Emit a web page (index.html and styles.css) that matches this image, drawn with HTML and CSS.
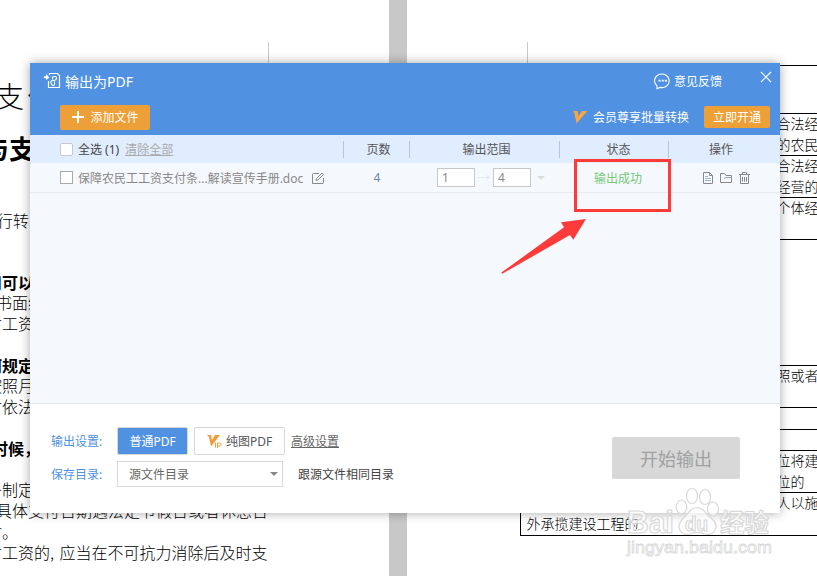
FILE: index.html
```html
<!DOCTYPE html>
<html lang="zh-CN">
<head>
    <meta charset="UTF-8">
    <meta name="viewport" content="width=device-width, initial-scale=1.0">
    <title>输出为PDF</title>
    <link rel="stylesheet" href="styles.css">
</head>
<body>

<div class="document">
    <div class="page page-left">
        <div class="crop-mark"></div>
        <p class="doc-title">支付</p>
        <p class="doc-subtitle">与支</p>
        <p class="first">行转</p>
        <div class="lines">
            <p class="shift bold">司可以</p>
            <p>书面约</p>
            <p class="shift">付工资</p>
            <p></p>
            <p class="shift bold">何规定</p>
            <p class="shift">按照月</p>
            <p class="shift">付依法</p>
            <p></p>
            <p class="half bold">时候，</p>
            <p></p>
            <p class="shift">条制定</p>
            <p>具体支付日期遇法定节假日或者休息日</p>
            <p class="shift">付。</p>
            <p class="shift comma">付工资的, 应当在不可抗力消除后及时支</p>
        </div>
    </div>
    <div class="page page-right">
        <div class="crop-mark"></div>
        <div class="doc-table">
            <div class="cell h48"></div>
            <div class="cell h42"><p>合法经</p><p>的农民</p></div>
            <div class="cell h42"><p>合法经</p><p>经营的</p></div>
            <div class="cell h42"><p>个体经</p></div>
            <div class="cell h126"></div>
            <div class="cell h42"><p>照或者</p></div>
            <div class="cell h22"></div>
            <div class="cell h21"></div>
            <div class="cell h42"><p>位将建</p><p>位的</p></div>
            <div class="cell h43"><p>人以施</p><p class="start">外承揽建设工程的</p></div>
        </div>
    </div>
</div>

<div class="dialog">
    <div class="header">
        <div class="title-bar">
            <svg class="logo" width="18" height="18" viewBox="0 0 18 18" fill="none" stroke="#fff">
                <path d="M5.500 3V1.500H13.500L15.500 3.500V15.500H4.500V9" stroke-width="1.2"/>
                <path d="M0 4.200H2V2L5.500 5.500 2 8V6.300H0z" fill="#fff" stroke="none"/>
                <path d="M8.500 7.500V5Q12.500 3.500 12.500 6T9 8.500 7.500 12 10.500 12V9.500" stroke-width="1.100"/>
            </svg>
            <span class="title">输出为PDF</span>
            <span class="feedback">
                <svg width="17" height="17" viewBox="0 0 17 17" fill="none" stroke="#fff" stroke-width="1.1">
                    <path d="M3 12.900A7.300 6.800 0 1 1 6 14.400L3 15.700z"/>
                    <path d="M4.500 7.700h2M7.700 7.700h2M10.900 7.700h2" stroke-width="1.800"/>
                </svg>
                意见反馈
            </span>
            <svg class="close" width="12" height="12" viewBox="0 0 12 12" stroke="#fff" stroke-width="1.1">
                <path d="M1 1L11 11M11 1L1 11"/>
            </svg>
        </div>
        <div class="toolbar">
            <button class="btn-orange btn-add">
                <svg width="12" height="12" viewBox="0 0 12 12" stroke="#fff" stroke-width="2"><path d="M6 0V12M0 6H12"/></svg>
                添加文件
            </button>
            <span class="vip">
                <svg width="15" height="14" viewBox="0 0 15 14" fill="#f7a640"><path d="M0 1H4.500L5.500 6 9 1H14.500L3.500 13.500 1.500 3.500z"/></svg>
                会员尊享批量转换
            </span>
            <button class="btn-orange btn-open">立即开通</button>
        </div>
    </div>

    <div class="grid table-head">
        <div class="col-name"><span class="checkbox light"></span><span class="dark">全选 (1)</span><a class="clear">清除全部</a></div>
        <div class="col">页数</div>
        <div class="col">输出范围</div>
        <div class="col wide">状态</div>
        <div class="col last">操作</div>
    </div>
    <div class="grid table-row">
        <div class="col-name">
            <span class="checkbox"></span><span class="file">保障农民工工资支付条...解读宣传手册.doc</span>
            <svg class="edit" width="14" height="14" viewBox="0 0 14 14" fill="none" stroke="#888">
                <path d="M8 2.500H2.500Q1.500 2.500 1.500 3.500V12.500H11Q12.500 12.500 12.500 11.500V7"/>
                <path d="M5 9.500L5.500 7.500 11 2 12.500 3.500 7 9z"/>
            </svg>
        </div>
        <div class="pages">4</div>
        <div class="range">
            <span class="num">1</span>
            <svg width="12" height="7" viewBox="0 0 12 7" stroke="#dfe3ea" fill="none"><path d="M0 3.500h2M3 3.500h2M6 3.500h5M9 1.500l2 2-2 2"/></svg>
            <span class="num">4</span>
            <i class="caret pale"></i>
        </div>
        <div class="status">输出成功</div>
        <div class="actions">
            <svg width="12" height="14" viewBox="0 0 12 14" fill="none" stroke="#888">
                <path d="M1.500 1.500H7.500L10.500 4.500V12.500H1.500z"/><path d="M7.500 1.500V4.500H10.500"/><path d="M3 5.500h3M3 7.500h6M3 9.500h6" stroke="#9fb2cf"/>
            </svg>
            <svg width="14" height="14" viewBox="0 0 14 14" fill="none" stroke="#888">
                <path d="M1.500 11.500V2.500H5.500L7 4.500H12.500V11.500z"/><path d="M5 7.500L7 6.500H12.500" stroke="#9aa6b8"/>
            </svg>
            <svg width="13" height="14" viewBox="0 0 13 14" fill="none" stroke="#888">
                <path d="M1 3.500H12M4.500 3V1.500H8.500V3M2.500 4V12.500H10.500V4"/><path d="M4.500 6v4.500M6.500 6v4.500M8.500 6v4.500"/>
            </svg>
        </div>
    </div>

    <div class="empty"></div>

    <div class="footer">
        <div class="settings">
            <div class="line">
                <span class="label">输出设置:</span>
                <button class="mode active">普通PDF</button>
                <button class="mode image-mode">
                    <svg width="15" height="14" viewBox="0 0 15 14"><path d="M0 1H4L5 6 8 1H13L4 12.500 2 3z" fill="#f29a38"/><path d="M8.500 8.500V13.500M10.500 14V9H12.500Q14 9 14 10.500T12.500 12H10.500" fill="none" stroke="#f29a38"/></svg>
                    纯图PDF
                </button>
                <a class="advanced">高级设置</a>
            </div>
            <div class="line">
                <span class="label">保存目录:</span>
                <div class="select">源文件目录<i class="caret"></i></div>
                <span class="same-dir">跟源文件相同目录</span>
            </div>
        </div>
        <button class="start-btn">开始输出</button>
    </div>
</div>

<div class="highlight"></div>
<svg class="arrow" width="90" height="60" viewBox="0 0 90 60">
    <path d="M4.300 57.600L67 12.300 64 7.300 89 4 76.300 24.700 73 20 5.300 58.700z" fill="#fd3b3a"/>
</svg>

<svg class="watermark" width="160" height="80" viewBox="0 0 160 80">
    <g class="mark">
        <text x="7" y="53" font-size="32" textLength="47" lengthAdjust="spacingAndGlyphs">Bai</text>
        <ellipse cx="61.500" cy="27" rx="5.300" ry="7"/>
        <ellipse cx="72" cy="16" rx="5.500" ry="7.500"/>
        <ellipse cx="85" cy="17" rx="5.500" ry="7.500"/>
        <ellipse cx="93" cy="29" rx="5.500" ry="7"/>
        <path d="M69 32Q77 23 85 32C88 37 97 40 96 47 95 54 90 55 85 54 79 52 75 52 70 54 65 55 59 53 59 46 60 39 66 37 69 32z"/>
        <text x="65" y="51" font-size="20" textLength="23" lengthAdjust="spacingAndGlyphs">du</text>
        <text x="100" y="52" font-size="25" textLength="49" lengthAdjust="spacingAndGlyphs">经验</text>
        <text x="7" y="73" font-size="17" textLength="145" lengthAdjust="spacingAndGlyphs" class="url">jingyan.baidu.com</text>
    </g>
</svg>

</body>
</html>
```
FILE: styles.css
```css
* {
    box-sizing: border-box;
}

body {
    position: relative;
    width: 817px;
    height: 576px;
    margin: 0;
    overflow: hidden;
    background: #c8c8c8;
    font-family: "Noto Sans", "Noto Sans CJK SC", sans-serif;
    font-size: 12px;
    color: #666;
}

p {
    margin: 0;
}

button {
    border: none;
    padding: 0;
    font-family: inherit;
    font-size: 12px;
}

/* document behind the dialog */
.document {
    display: flex;
    gap: 18px;
    height: 576px;
    font-family: "Noto Sans CJK SC", sans-serif;
    font-weight: 300;
    color: #000;
    white-space: nowrap;
}

.page {
    background: #fff;
    overflow: hidden;
    padding-top: 42px;
}

.page-left {
    width: 389px;
}

.page-right {
    width: 410px;
}

.crop-mark {
    width: 269px;
    height: 23px;
    border-right: 1px solid #c8c8c8;
}

.page-right .crop-mark {
    width: 121px;
}

.doc-title {
    margin: 10px 0 0 -5px;
    font-size: 29px;
    letter-spacing: 3px;
    line-height: 40px;
}

.doc-subtitle {
    margin: 15px 0 0 -17px;
    font-size: 26px;
    font-weight: bold;
    line-height: 36px;
}

.first {
    margin: 45px 0 0 -3px;
    font-size: 15.9px;
    line-height: 20px;
}

.lines {
    margin-top: 40.5px;
    font-size: 16px;
}

.lines p {
    height: 20.8px;
    margin-left: -4px;
    line-height: 20.8px;
}

.lines .shift {
    margin-left: -14px;
}

.lines .half {
    margin-left: -8px;
}

.lines .comma {
    word-spacing: 2px;
}

.bold {
    font-weight: bold;
}

.doc-table {
    margin-left: 113px;
    border-top: 1px solid #000;
    border-left: 1px solid #000;
    font-size: 14px;
}

.cell {
    display: flex;
    flex-direction: column;
    border-bottom: 1px solid #000;
    padding-left: 255.5px;
}

.cell p {
    line-height: 21px;
}

.cell p:first-child {
    margin-top: -1px;
}

.cell .start {
    margin-left: -250px;
}

.h48 { height: 48px; }
.h42 { height: 42px; }
.h43 { height: 43px; }
.h126 { height: 126px; }
.h22 { height: 22px; }
.h21 { height: 21px; }

/* dialog */
.dialog {
    position: absolute;
    left: 30px;
    top: 63px;
    display: flex;
    flex-direction: column;
    width: 750px;
    height: 450px;
    background: #f5f8fd;
    box-shadow: 0 0 10px rgba(0, 0, 0, 0.35);
    white-space: nowrap;
}

.header {
    height: 72px;
    background: #5092e1;
    color: #fff;
}

.title-bar {
    display: flex;
    align-items: center;
    height: 36px;
    padding: 0 8px 0 14px;
}

.title {
    margin-left: 3px;
    font-size: 14px;
}

.feedback {
    display: flex;
    align-items: center;
    gap: 3px;
    margin-left: auto;
    margin-right: 38px;
}

.close {
    margin-bottom: 8px;
}

.toolbar {
    display: flex;
    align-items: center;
    height: 36px;
    padding: 0 10px 0 30px;
}

.btn-orange {
    display: flex;
    align-items: center;
    justify-content: center;
    background: #eda037;
    border-radius: 2px;
    color: #fff;
}

.btn-add {
    gap: 6px;
    width: 90px;
    height: 25px;
    padding-left: 1px;
}

.btn-open {
    width: 66px;
    height: 22px;
}

.vip {
    display: flex;
    align-items: center;
    gap: 5px;
    margin-left: auto;
    margin-right: 15px;
}

.grid {
    display: grid;
    grid-template-columns: 314px 66px 150px 109px 111px;
    align-items: center;
}

.table-head {
    height: 28px;
    background: #e0edfe;
    color: #555;
}

.table-head > div {
    height: 17px;
    line-height: 17px;
    border-right: 1px solid #b4c6df;
}

.table-head .col {
    padding-left: 4px;
}

.table-head .wide {
    padding-left: 9px;
}

.table-head .last {
    border-right: none;
    padding-right: 11px;
}

.col {
    text-align: center;
}

.col-name {
    display: flex;
    align-items: center;
    padding-left: 30px;
}

.checkbox {
    width: 13px;
    height: 13px;
    margin-right: 5px;
    background: #fff;
    border: 1px solid #aaa;
}

.checkbox.light {
    border-color: #c8c8c8;
    border-radius: 2px;
}

.dark {
    color: #444;
}

.clear {
    margin-left: 6px;
    color: #aaa;
    text-decoration: underline;
}

.table-row {
    height: 30px;
    border-bottom: 1px solid #e8ebf0;
    color: #888;
}

.edit {
    margin-left: 8px;
}

.pages {
    text-align: center;
    color: #6787ae;
}

.range {
    display: flex;
    align-items: center;
    padding-left: 27px;
}

.range svg {
    margin: 0 3px;
}

.num {
    width: 38px;
    height: 19px;
    padding-left: 4px;
    background: #fff;
    border: 1px solid #c8c8c8;
    line-height: 17px;
}

.caret {
    border: 4px solid transparent;
    border-top-color: #888;
    border-bottom: none;
}

.caret.pale {
    margin-left: 6px;
    border-top-color: #ddd;
}

.status {
    padding-left: 7px;
    text-align: center;
    color: #78c878;
}

.actions {
    display: flex;
    gap: 5px;
    padding-left: 33px;
}

.empty {
    flex: 1;
}

.footer {
    display: flex;
    justify-content: space-between;
    height: 110px;
    padding: 23px 40px 0 21px;
    background: #fff;
    border-top: 1px solid #e4e7ec;
}

.settings {
    display: flex;
    flex-direction: column;
    gap: 6px;
}

.line {
    display: flex;
    align-items: center;
}

.label {
    width: 66px;
    color: #5092e1;
}

.mode {
    width: 71px;
    height: 28px;
    border: 1px solid #d8d8d8;
    border-radius: 2px;
    background: #fff;
    color: #555;
}

.mode.active {
    background: #5092e1;
    color: #fff;
}

.image-mode {
    display: flex;
    align-items: center;
    justify-content: center;
    gap: 4px;
    width: 91px;
    margin-left: 6px;
}

.advanced {
    margin-left: 6px;
    text-decoration: underline;
}

.select {
    display: flex;
    align-items: center;
    justify-content: space-between;
    width: 166px;
    height: 26px;
    padding: 0 4px 0 11px;
    border: 1px solid #d8d8d8;
}

.same-dir {
    margin-left: 15px;
    color: #444;
}

.start-btn {
    width: 128px;
    height: 42px;
    margin-top: 10px;
    border-radius: 2px;
    background: #d8d8d8;
    color: #a0a0a0;
    font-size: 18px;
}

/* annotations over the dialog */
.highlight {
    position: absolute;
    left: 574px;
    top: 159px;
    width: 97px;
    height: 53px;
    border: 3px solid #fd3b3a;
}

.arrow {
    position: absolute;
    left: 497px;
    top: 215px;
}

.watermark {
    position: absolute;
    left: 620px;
    top: 480px;
}

.mark {
    fill: rgba(255, 255, 255, 0.65);
    stroke: #d8d8d8;
    stroke-width: 1.2;
    font-family: "Liberation Sans", "Noto Sans CJK SC", sans-serif;
    font-weight: bold;
}

.url {
    font-weight: normal;
    stroke-width: 0.8;
}
```
